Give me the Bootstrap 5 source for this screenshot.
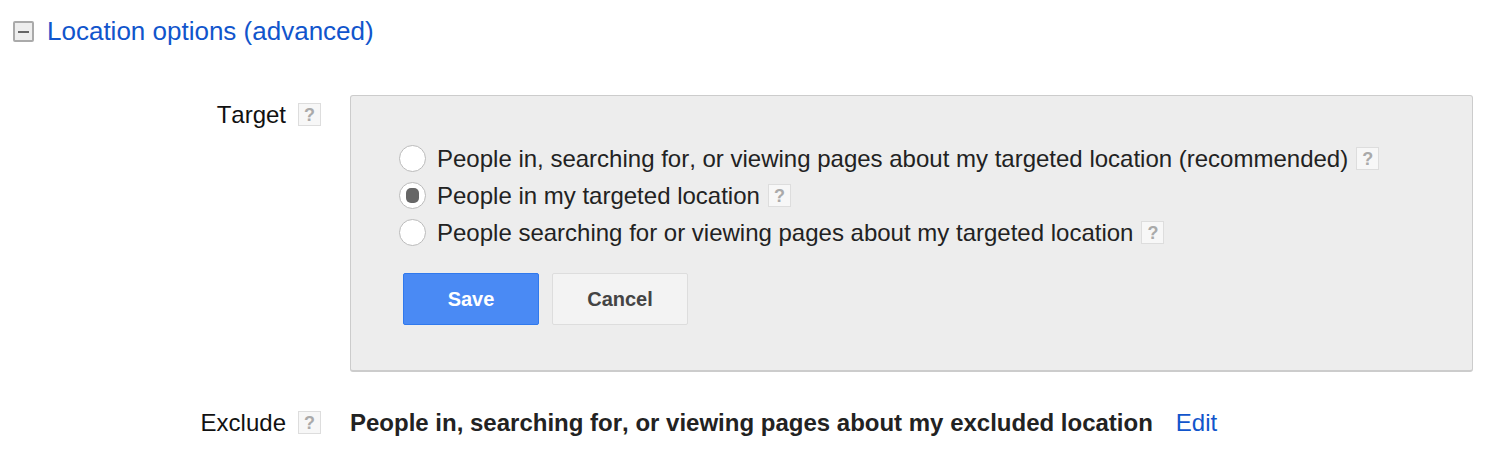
<!DOCTYPE html>
<html lang="en"><head><meta charset="utf-8"><title>Location options</title>
<link href="https://cdn.jsdelivr.net/npm/bootstrap@5.3.0/dist/css/bootstrap.min.css" rel="stylesheet">
<style>
html,body{height:463px;overflow:hidden}
body{font-family:"Liberation Sans",Arial,sans-serif;font-size:24px;line-height:37px;color:#222;background:#fff;padding:13px 27px 0 13px;font-kerning:none}
a{color:#1155cc;text-decoration:none}
.head-row{height:37px;gap:13px}
.toggle-box{width:21px;height:21px;border:2px solid #aaa;border-radius:2px;background:#eee;flex:none}
.toggle-box::before{content:"";display:block;width:11px;height:2px;background:#666;margin:7.5px auto 0}
.head-link{font-size:26px}
.form-line{margin-top:46px}
.label-col{width:308px;flex:none;gap:12px;color:#111;line-height:37px;height:37px}
.help-box{display:inline-flex;align-items:center;justify-content:center;width:23px;height:23px;border:1px solid #ddd;background:#f7f7f7;color:#aaa;font-size:18px;font-weight:700;line-height:1;flex:none}
.opt-help{margin-left:-3px}
.panel-box{width:1123px;height:277px;margin-left:29px;margin-top:-1px;background:#ededed;border:1px solid #ccc;border-bottom-width:2px;border-radius:3px;padding:44px 48px}
.opt-line{height:37px;gap:11px}
.radio-dot{width:27px;height:27px;border-radius:50%;background:#fff;border:1px solid #bbb;flex:none;display:flex;align-items:center;justify-content:center}
.radio-dot.on::before{content:"";width:13px;height:15px;border-radius:5px;background:#666}
.act-btn{width:136px;height:52px;font-size:20px;font-weight:700;border-radius:2px;padding:0;line-height:1}
.act-save{background:#4a8af4;border:1px solid #3079ed;color:#fff;margin-left:4px}
.act-cancel{background:#f3f3f3;border:1px solid #ddd;color:#444}
.btn-line{gap:13px;margin-top:22px}
.exclude-line{margin-top:32px}
.ex-text{margin-left:29px;font-weight:700}
.ex-edit{margin-left:23px}
</style></head>
<body>
<div class="d-flex align-items-center head-row"><span class="toggle-box"></span><a class="head-link" href="#">Location options (advanced)</a></div>
<div class="d-flex align-items-start form-line">
  <div class="label-col d-flex justify-content-end align-items-center"><span>Target</span><span class="help-box">?</span></div>
  <div class="panel-box">
    <div class="opt-line d-flex align-items-center"><span class="radio-dot"></span><span>People in, searching for, or viewing pages about my targeted location (recommended)</span><span class="help-box opt-help">?</span></div>
    <div class="opt-line d-flex align-items-center"><span class="radio-dot on"></span><span>People in my targeted location</span><span class="help-box opt-help">?</span></div>
    <div class="opt-line d-flex align-items-center"><span class="radio-dot"></span><span>People searching for or viewing pages about my targeted location</span><span class="help-box opt-help">?</span></div>
    <div class="d-flex btn-line"><button type="button" class="btn act-btn act-save">Save</button><button type="button" class="btn act-btn act-cancel">Cancel</button></div>
  </div>
</div>
<div class="d-flex align-items-center exclude-line">
  <div class="label-col d-flex justify-content-end align-items-center"><span>Exclude</span><span class="help-box">?</span></div>
  <span class="ex-text">People in, searching for, or viewing pages about my excluded location</span><a class="ex-edit" href="#">Edit</a>
</div>
<script src="https://cdn.jsdelivr.net/npm/bootstrap@5.3.0/dist/js/bootstrap.bundle.min.js"></script>
</body></html>
